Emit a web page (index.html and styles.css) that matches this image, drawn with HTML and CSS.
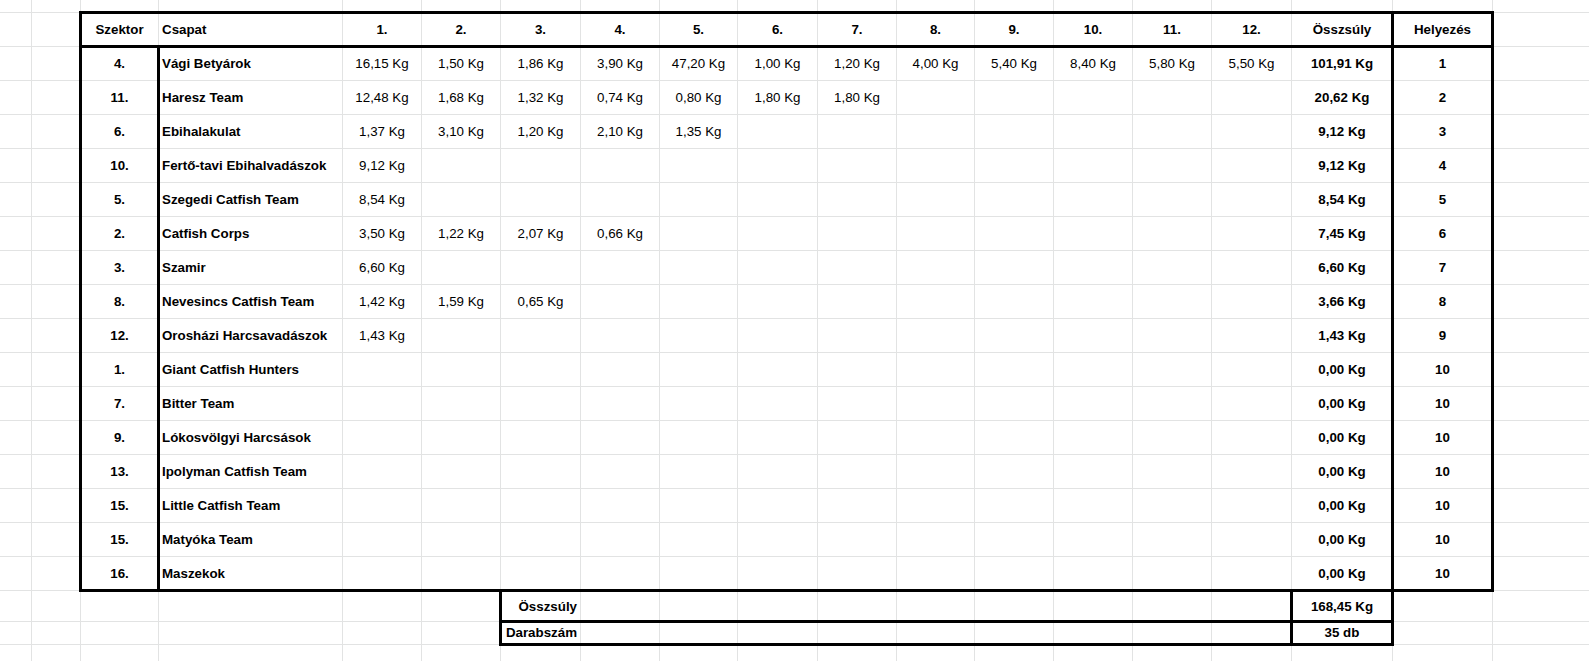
FILE: index.html
```html
<!DOCTYPE html>
<html lang="hu">
<head>
<meta charset="utf-8">
<title>Eredmények</title>
<link rel="stylesheet" href="styles.css">
</head>
<body>
<div class="sheet">
  <div class="cells">
    <div class="row top"><div></div><div></div><div></div><div></div><div></div><div></div><div></div><div></div><div></div><div></div><div></div><div></div><div></div><div></div><div></div><div></div><div></div><div></div><div></div></div>
    <div class="row hd"><div></div><div></div><div>Szektor</div><div class="t">Csapat</div><div>1.</div><div>2.</div><div>3.</div><div>4.</div><div>5.</div><div>6.</div><div>7.</div><div>8.</div><div>9.</div><div>10.</div><div>11.</div><div>12.</div><div>Összsúly</div><div>Helyezés</div><div></div></div>
    <div class="row"><div></div><div></div><div>4.</div><div class="t">Vági Betyárok</div><div class="w">16,15 Kg</div><div class="w">1,50 Kg</div><div class="w">1,86 Kg</div><div class="w">3,90 Kg</div><div class="w">47,20 Kg</div><div class="w">1,00 Kg</div><div class="w">1,20 Kg</div><div class="w">4,00 Kg</div><div class="w">5,40 Kg</div><div class="w">8,40 Kg</div><div class="w">5,80 Kg</div><div class="w">5,50 Kg</div><div>101,91 Kg</div><div>1</div><div></div></div>
    <div class="row"><div></div><div></div><div>11.</div><div class="t">Haresz Team</div><div class="w">12,48 Kg</div><div class="w">1,68 Kg</div><div class="w">1,32 Kg</div><div class="w">0,74 Kg</div><div class="w">0,80 Kg</div><div class="w">1,80 Kg</div><div class="w">1,80 Kg</div><div></div><div></div><div></div><div></div><div></div><div>20,62 Kg</div><div>2</div><div></div></div>
    <div class="row"><div></div><div></div><div>6.</div><div class="t">Ebihalakulat</div><div class="w">1,37 Kg</div><div class="w">3,10 Kg</div><div class="w">1,20 Kg</div><div class="w">2,10 Kg</div><div class="w">1,35 Kg</div><div></div><div></div><div></div><div></div><div></div><div></div><div></div><div>9,12 Kg</div><div>3</div><div></div></div>
    <div class="row"><div></div><div></div><div>10.</div><div class="t">Fertő-tavi Ebihalvadászok</div><div class="w">9,12 Kg</div><div></div><div></div><div></div><div></div><div></div><div></div><div></div><div></div><div></div><div></div><div></div><div>9,12 Kg</div><div>4</div><div></div></div>
    <div class="row"><div></div><div></div><div>5.</div><div class="t">Szegedi Catfish Team</div><div class="w">8,54 Kg</div><div></div><div></div><div></div><div></div><div></div><div></div><div></div><div></div><div></div><div></div><div></div><div>8,54 Kg</div><div>5</div><div></div></div>
    <div class="row"><div></div><div></div><div>2.</div><div class="t">Catfish Corps</div><div class="w">3,50 Kg</div><div class="w">1,22 Kg</div><div class="w">2,07 Kg</div><div class="w">0,66 Kg</div><div></div><div></div><div></div><div></div><div></div><div></div><div></div><div></div><div>7,45 Kg</div><div>6</div><div></div></div>
    <div class="row"><div></div><div></div><div>3.</div><div class="t">Szamir</div><div class="w">6,60 Kg</div><div></div><div></div><div></div><div></div><div></div><div></div><div></div><div></div><div></div><div></div><div></div><div>6,60 Kg</div><div>7</div><div></div></div>
    <div class="row"><div></div><div></div><div>8.</div><div class="t">Nevesincs Catfish Team</div><div class="w">1,42 Kg</div><div class="w">1,59 Kg</div><div class="w">0,65 Kg</div><div></div><div></div><div></div><div></div><div></div><div></div><div></div><div></div><div></div><div>3,66 Kg</div><div>8</div><div></div></div>
    <div class="row"><div></div><div></div><div>12.</div><div class="t">Orosházi Harcsavadászok</div><div class="w">1,43 Kg</div><div></div><div></div><div></div><div></div><div></div><div></div><div></div><div></div><div></div><div></div><div></div><div>1,43 Kg</div><div>9</div><div></div></div>
    <div class="row"><div></div><div></div><div>1.</div><div class="t">Giant Catfish Hunters</div><div></div><div></div><div></div><div></div><div></div><div></div><div></div><div></div><div></div><div></div><div></div><div></div><div>0,00 Kg</div><div>10</div><div></div></div>
    <div class="row"><div></div><div></div><div>7.</div><div class="t">Bitter Team</div><div></div><div></div><div></div><div></div><div></div><div></div><div></div><div></div><div></div><div></div><div></div><div></div><div>0,00 Kg</div><div>10</div><div></div></div>
    <div class="row"><div></div><div></div><div>9.</div><div class="t">Lókosvölgyi Harcsások</div><div></div><div></div><div></div><div></div><div></div><div></div><div></div><div></div><div></div><div></div><div></div><div></div><div>0,00 Kg</div><div>10</div><div></div></div>
    <div class="row"><div></div><div></div><div>13.</div><div class="t">Ipolyman Catfish Team</div><div></div><div></div><div></div><div></div><div></div><div></div><div></div><div></div><div></div><div></div><div></div><div></div><div>0,00 Kg</div><div>10</div><div></div></div>
    <div class="row"><div></div><div></div><div>15.</div><div class="t">Little Catfish Team</div><div></div><div></div><div></div><div></div><div></div><div></div><div></div><div></div><div></div><div></div><div></div><div></div><div>0,00 Kg</div><div>10</div><div></div></div>
    <div class="row"><div></div><div></div><div>15.</div><div class="t">Matyóka Team</div><div></div><div></div><div></div><div></div><div></div><div></div><div></div><div></div><div></div><div></div><div></div><div></div><div>0,00 Kg</div><div>10</div><div></div></div>
    <div class="row"><div></div><div></div><div>16.</div><div class="t">Maszekok</div><div></div><div></div><div></div><div></div><div></div><div></div><div></div><div></div><div></div><div></div><div></div><div></div><div>0,00 Kg</div><div>10</div><div></div></div>
    <div class="row sum"><div></div><div></div><div></div><div></div><div></div><div></div><div class="r">Összsúly</div><div></div><div></div><div></div><div></div><div></div><div></div><div></div><div></div><div></div><div>168,45 Kg</div><div></div><div></div></div>
    <div class="row cnt"><div></div><div></div><div></div><div></div><div></div><div></div><div class="r">Darabszám</div><div></div><div></div><div></div><div></div><div></div><div></div><div></div><div></div><div></div><div>35 db</div><div></div><div></div></div>
    <div class="row"><div></div><div></div><div></div><div></div><div></div><div></div><div></div><div></div><div></div><div></div><div></div><div></div><div></div><div></div><div></div><div></div><div></div><div></div><div></div></div>
  </div>
  <div class="frames">
    <div class="frame f-main"></div>
    <div class="frame f-head"></div>
    <div class="frame f-sector"></div>
    <div class="frame f-rank"></div>
    <div class="frame f-totals"></div>
    <div class="frame f-sumrow"></div>
    <div class="frame f-sumval"></div>
  </div>
</div>
</body>
</html>
```

FILE: styles.css
```css
html, body {
  margin: 0;
  padding: 0;
  background: #fff;
  overflow: hidden;
}

body {
  font-family: "Liberation Sans", Arial, sans-serif;
  font-size: 13.333px;
  color: #000;
}

.sheet {
  display: grid;
  width: 1593px;
}

.cells,
.frames {
  grid-area: 1 / 1;
  display: grid;
  grid-template-columns: 32px 49px 78px 184px 79px 79px 80px 79px 78px 80px 79px 78px 79px 79px 79px 80px 101px 100px 100px;
  grid-template-rows: 13px 34px repeat(16, 34px) 31px 23px 30px;
}

.row {
  display: contents;
}

.row > div {
  box-sizing: border-box;
  min-width: 0;
  border-right: 1px solid #e2e3e3;
  border-bottom: 1px solid #e2e3e3;
  background: #fff;
  display: flex;
  align-items: flex-end;
  justify-content: center;
  padding: 0 3px 9px;
  font-weight: 700;
  line-height: 15px;
  white-space: nowrap;
}

.row > .t {
  justify-content: flex-start;
}

.row > .r {
  justify-content: flex-end;
}

.row > .w {
  font-weight: 400;
}

.sum > div {
  padding-bottom: 7px;
}

.cnt > div {
  padding-bottom: 4px;
}

.frames {
  pointer-events: none;
}

.frame {
  border: 3px solid #000;
  margin: -2px -1px -1px -2px;
}

.f-main {
  grid-row: 2 / 19;
  grid-column: 3 / 19;
}

.f-head {
  grid-row: 2 / 3;
  grid-column: 3 / 19;
}

.f-sector {
  grid-row: 3 / 19;
  grid-column: 3 / 4;
}

.f-rank {
  grid-row: 2 / 19;
  grid-column: 18 / 19;
}

.f-totals {
  grid-row: 19 / 21;
  grid-column: 7 / 18;
}

.f-sumrow {
  grid-row: 19 / 20;
  grid-column: 7 / 18;
}

.f-sumval {
  grid-row: 19 / 21;
  grid-column: 17 / 18;
}
```
